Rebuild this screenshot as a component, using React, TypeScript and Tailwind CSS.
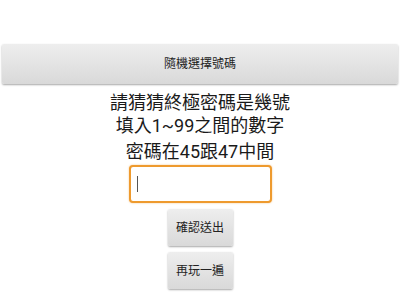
export default function App() {
  return (
    <div
      className="w-[400px] h-[300px] bg-white overflow-hidden flex flex-col items-center text-[#1a1a1a]"
      style={{ fontFamily: 'Roboto, "Noto Sans CJK TC", "Noto Sans", sans-serif' }}
    >
      <div className="w-full px-[2px] pt-[44px]">
        <button className="w-full h-[40px] rounded-[2px] bg-gradient-to-b from-[#eeeeee] to-[#d9d9d9] shadow-[0_1px_2px_rgba(0,0,0,0.35)] text-[12px] text-[#222]">
          隨機選擇號碼
        </button>
      </div>
      <div className="mt-[7px] text-center text-[18px] leading-[23px]">
        <div>請猜猜終極密碼是幾號</div>
        <div>填入1~99之間的數字</div>
      </div>
      <div className="mt-[3px] text-[18px] leading-[23px]">密碼在45跟47中間</div>
      <div className="mt-[2px] w-[143px] h-[38px] border-2 border-[#ee9a2e] rounded-[4px] bg-white flex items-center pl-[6px] shadow-[0_0_2px_rgba(238,154,46,0.6)]">
        <div className="w-[1px] h-[16px] bg-[#555]" />
      </div>
      <button className="mt-[6px] w-[65px] h-[37px] rounded-[2px] bg-gradient-to-b from-[#eeeeee] to-[#d9d9d9] shadow-[0_1px_2px_rgba(0,0,0,0.35)] text-[12px] text-[#222]">
        確認送出
      </button>
      <button className="mt-[6px] w-[65px] h-[37px] rounded-[2px] bg-gradient-to-b from-[#eeeeee] to-[#d9d9d9] shadow-[0_1px_2px_rgba(0,0,0,0.35)] text-[12px] text-[#222]">
        再玩一遍
      </button>
    </div>
  );
}
